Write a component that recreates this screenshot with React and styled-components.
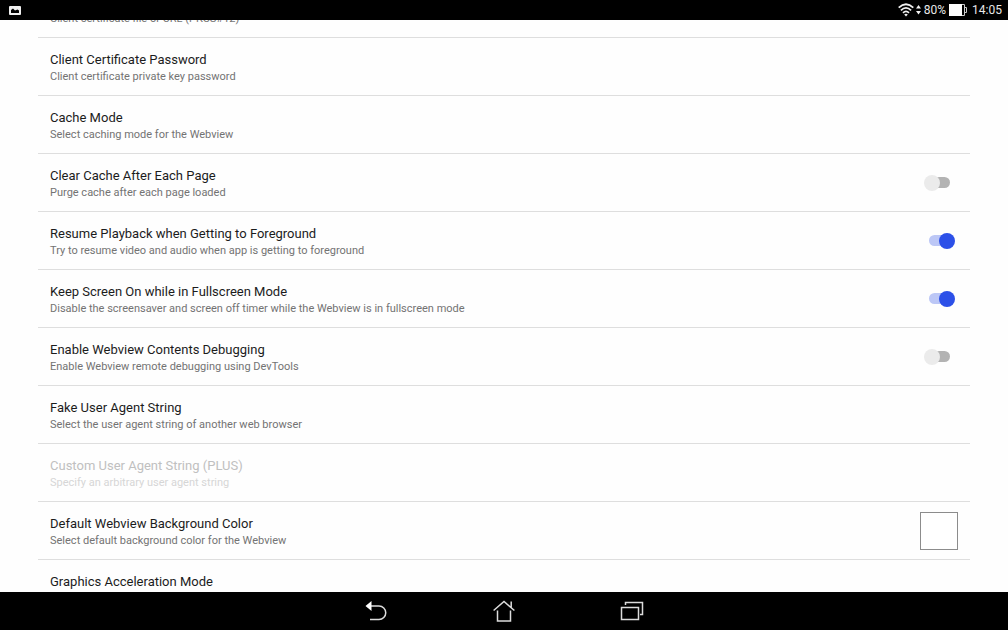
import React from "react";
import styled, { createGlobalStyle } from "styled-components";

const GlobalStyle = createGlobalStyle`
  *, *::before, *::after { box-sizing: border-box; }
  body { margin: 0; background: #fefefe; font-family: Roboto, "Noto Sans", sans-serif; }
`;

const Screen = styled.div`
  display: flex;
  flex-direction: column;
  height: 100vh;
  overflow: hidden;
`;

const StatusBar = styled.header`
  display: flex;
  flex: none;
  align-items: center;
  justify-content: space-between;
  height: 20px;
  padding: 0 6px 0 9px;
  background: #000;
  color: #e8e8e8;
  font-size: 12px;
  line-height: 20px;
`;

const StatusGroup = styled.div`
  display: flex;
  align-items: center;
  gap: ${(p) => p.$gap}px;
`;

const Icon = styled.svg`
  display: block;
  flex: none;
`;

const Content = styled.main`
  flex: 1;
  min-height: 0;
  overflow: hidden;
  padding: 0 38px;
`;

/* The list is part-way scrolled: its first row is mostly above the fold. */
const PreferenceList = styled.ul`
  margin: -40px 0 0;
  padding: 0;
  list-style: none;
`;

const Preference = styled.li`
  display: flex;
  align-items: center;
  justify-content: space-between;
  padding: 12px;
  border-bottom: 1px solid #dedede;
`;

const Label = styled.label`
  display: flex;
  flex-direction: column;
  padding-top: 1px;
  margin-bottom: -1px;
`;

const Title = styled.span`
  color: ${(p) => (p.$disabled ? "#c0c0c0" : "#1c1c1c")};
  font-size: 13px;
  line-height: 18px;
`;

const Summary = styled.span`
  color: ${(p) => (p.$disabled ? "#d6d6d6" : "#737373")};
  font-size: 11px;
  line-height: 15px;
`;

const Switch = styled.input`
  appearance: none;
  position: relative;
  display: flex;
  align-items: center;
  width: 26px;
  height: 16px;
  margin: 0 8px 0 0;

  &::before {
    content: "";
    width: 24px;
    height: 11px;
    margin-left: 2px;
    border-radius: 6px;
    background: #b3b3b3;
  }
  &::after {
    content: "";
    position: absolute;
    left: 0;
    width: 16px;
    height: 16px;
    border-radius: 50%;
    background: #ebebeb;
  }
  &:checked { margin-right: 3px; }
  &:checked::before { margin-left: 0; background: #bcc7f6; }
  &:checked::after { left: 10px; background: #2c50e8; }
`;

const ColorSwatch = styled.button`
  width: 38px;
  height: 38px;
  margin: -3px 0;
  padding: 0;
  border: 1px solid #8c8c8c;
  background: #fff;
`;

const NavBar = styled.nav`
  display: flex;
  flex: none;
  align-items: center;
  justify-content: center;
  gap: 98px;
  height: 38px;
  background: #000;
`;

const NavButton = styled.button`
  display: flex;
  align-items: center;
  justify-content: center;
  width: 30px;
  height: 38px;
  padding: 0;
  border: 0;
  background: none;
  color: #dcdcdc;
`;

const preferences = [
  { id: "cert-file", title: "Client Certificate File", summary: "Client certificate file or URL (PKCS#12)" },
  { id: "cert-pass", title: "Client Certificate Password", summary: "Client certificate private key password" },
  { id: "cache", title: "Cache Mode", summary: "Select caching mode for the Webview" },
  { id: "clear", title: "Clear Cache After Each Page", summary: "Purge cache after each page loaded", control: "switch", on: false },
  { id: "resume", title: "Resume Playback when Getting to Foreground", summary: "Try to resume video and audio when app is getting to foreground", control: "switch", on: true },
  { id: "keep-on", title: "Keep Screen On while in Fullscreen Mode", summary: "Disable the screensaver and screen off timer while the Webview is in fullscreen mode", control: "switch", on: true },
  { id: "debug", title: "Enable Webview Contents Debugging", summary: "Enable Webview remote debugging using DevTools", control: "switch", on: false },
  { id: "fake-ua", title: "Fake User Agent String", summary: "Select the user agent string of another web browser" },
  { id: "custom-ua", title: "Custom User Agent String (PLUS)", summary: "Specify an arbitrary user agent string", disabled: true },
  { id: "bg", title: "Default Webview Background Color", summary: "Select default background color for the Webview", control: "color" },
  { id: "gfx", title: "Graphics Acceleration Mode" },
];

function PreferenceRow({ id, title, summary, control, on, disabled }) {
  return (
    <Preference>
      <Label as={control ? "label" : "div"} htmlFor={control ? id : undefined}>
        <Title $disabled={disabled}>{title}</Title>
        {summary && <Summary $disabled={disabled}>{summary}</Summary>}
      </Label>
      {control === "switch" && <Switch id={id} type="checkbox" role="switch" defaultChecked={on} />}
      {control === "color" && <ColorSwatch id={id} type="button" />}
    </Preference>
  );
}

export default function App() {
  return (
    <Screen>
      <GlobalStyle />
      <StatusBar>
        <Icon width="12" height="9" viewBox="0 0 12 9" aria-hidden="true">
          <rect width="12" height="9" rx="1" fill="#f0f0f0" />
          <path d="M2 7V4l2-1.500 2 2 2.500-1L10 4.500V7z" fill="#000" />
        </Icon>
        <StatusGroup $gap={5}>
          <StatusGroup $gap={3}>
            <Icon width="23" height="14" viewBox="0 0 23 14" aria-hidden="true">
              <g fill="none" stroke="#f0f0f0" strokeWidth="1.8">
                <path d="M.7 4.600Q8 -2.200 15.300 4.600" />
                <path d="M2.900 7.300Q8 2.500 13.100 7.300" />
                <path d="M5 9.800Q8 7 11 9.800" />
              </g>
              <path d="M6.200 11.500Q8 9.900 9.800 11.500L8 13.500z" fill="#f0f0f0" />
              <path d="M18 5.500l2.500-3.500 2.500 3.500zM18 8l2.500 3.500 2.500-3.500z" fill="#f0f0f0" />
            </Icon>
            <span>80%</span>
            <Icon width="18" height="12" viewBox="0 0 18 12" aria-hidden="true">
              <path d="M0 0h13v12H0z" fill="#fff" />
              <path d="M13 .5h2.500v11H13M16 3.500h1.500v5H16" fill="none" stroke="#ccc" />
            </Icon>
          </StatusGroup>
          <time>14:05</time>
        </StatusGroup>
      </StatusBar>
      <Content>
        <PreferenceList>
          {preferences.map((p) => (
            <PreferenceRow key={p.id} {...p} />
          ))}
        </PreferenceList>
      </Content>
      <NavBar>
        <NavButton type="button" aria-label="Back">
          <Icon width="22" height="20" viewBox="0 0 22 20" fill="none" stroke="currentColor" strokeWidth="1.5">
            <path d="M5 5h9a6.700 6.700 0 0 1 0 13.500H5" />
            <path d="M6.500 0v10L.5 5z" fill="#fff" stroke="none" />
          </Icon>
        </NavButton>
        <NavButton type="button" aria-label="Home">
          <Icon width="22" height="22" viewBox="0 0 22 22" fill="none" stroke="currentColor" strokeWidth="1.5">
            <path d="M.6 10.500L11 1.500l10.400 9M18.200 7.500V1.500M4.500 10.500V21h13V10.500" />
          </Icon>
        </NavButton>
        <NavButton type="button" aria-label="Recent apps">
          <Icon width="24" height="20" viewBox="0 0 24 20" fill="none" stroke="currentColor" strokeWidth="1.500">
            <path d="M1.500 6.500h17v12h-17zM5.500 4V1.500h17v12H20" />
          </Icon>
        </NavButton>
      </NavBar>
    </Screen>
  );
}
